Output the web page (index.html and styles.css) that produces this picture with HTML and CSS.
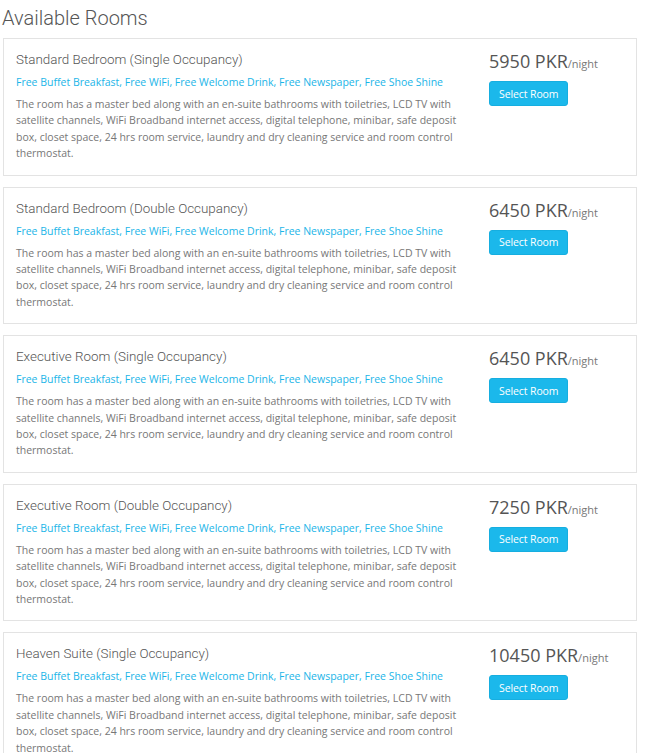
FILE: index.html
```html
<!DOCTYPE html>
<html>
<head>
<meta charset="utf-8">
<link rel="stylesheet" href="styles.css">
</head>
<body>
<div class="page">
  <h2 class="page-title">Available Rooms</h2>
  <div class="rooms">
    <div class="room">
      <div class="room-info">
        <h3 class="room-name">Standard Bedroom (Single Occupancy)</h3>
        <p class="amenities">Free Buffet Breakfast, Free WiFi, Free Welcome Drink, Free Newspaper, Free Shoe Shine</p>
        <p class="desc">The room has a master bed along with an en-suite bathrooms with toiletries, LCD TV with satellite channels, WiFi Broadband internet access, digital telephone, minibar, safe deposit box, closet space, 24 hrs room service, laundry and dry cleaning service and room control thermostat.</p>
      </div>
      <div class="room-book">
        <div class="price">5950 PKR<span class="per">/night</span></div>
        <button class="btn">Select Room</button>
      </div>
    </div>
    <div class="room">
      <div class="room-info">
        <h3 class="room-name">Standard Bedroom (Double Occupancy)</h3>
        <p class="amenities">Free Buffet Breakfast, Free WiFi, Free Welcome Drink, Free Newspaper, Free Shoe Shine</p>
        <p class="desc">The room has a master bed along with an en-suite bathrooms with toiletries, LCD TV with satellite channels, WiFi Broadband internet access, digital telephone, minibar, safe deposit box, closet space, 24 hrs room service, laundry and dry cleaning service and room control thermostat.</p>
      </div>
      <div class="room-book">
        <div class="price">6450 PKR<span class="per">/night</span></div>
        <button class="btn">Select Room</button>
      </div>
    </div>
    <div class="room">
      <div class="room-info">
        <h3 class="room-name">Executive Room (Single Occupancy)</h3>
        <p class="amenities">Free Buffet Breakfast, Free WiFi, Free Welcome Drink, Free Newspaper, Free Shoe Shine</p>
        <p class="desc">The room has a master bed along with an en-suite bathrooms with toiletries, LCD TV with satellite channels, WiFi Broadband internet access, digital telephone, minibar, safe deposit box, closet space, 24 hrs room service, laundry and dry cleaning service and room control thermostat.</p>
      </div>
      <div class="room-book">
        <div class="price">6450 PKR<span class="per">/night</span></div>
        <button class="btn">Select Room</button>
      </div>
    </div>
    <div class="room">
      <div class="room-info">
        <h3 class="room-name">Executive Room (Double Occupancy)</h3>
        <p class="amenities">Free Buffet Breakfast, Free WiFi, Free Welcome Drink, Free Newspaper, Free Shoe Shine</p>
        <p class="desc">The room has a master bed along with an en-suite bathrooms with toiletries, LCD TV with satellite channels, WiFi Broadband internet access, digital telephone, minibar, safe deposit box, closet space, 24 hrs room service, laundry and dry cleaning service and room control thermostat.</p>
      </div>
      <div class="room-book">
        <div class="price">7250 PKR<span class="per">/night</span></div>
        <button class="btn">Select Room</button>
      </div>
    </div>
    <div class="room">
      <div class="room-info">
        <h3 class="room-name">Heaven Suite (Single Occupancy)</h3>
        <p class="amenities">Free Buffet Breakfast, Free WiFi, Free Welcome Drink, Free Newspaper, Free Shoe Shine</p>
        <p class="desc">The room has a master bed along with an en-suite bathrooms with toiletries, LCD TV with satellite channels, WiFi Broadband internet access, digital telephone, minibar, safe deposit box, closet space, 24 hrs room service, laundry and dry cleaning service and room control thermostat.</p>
      </div>
      <div class="room-book">
        <div class="price">10450 PKR<span class="per">/night</span></div>
        <button class="btn">Select Room</button>
      </div>
    </div>
  </div>
</div>
</body>
</html>
```
FILE: styles.css
```css
html, body {
  margin: 0;
  padding: 0;
  background: #fff;
}
.page {
  padding: 5px 10px 0 2px;
  font-family: "Open Sans", "Liberation Sans", sans-serif;
  color: #666;
}
.page-title {
  font-family: Roboto, "Open Sans", sans-serif;
  font-weight: 300;
  font-size: 20px;
  line-height: 26px;
  color: #555;
  margin: 0 0 7px 0;
}
.rooms {
  display: flex;
  flex-direction: column;
  gap: 11px;
  margin-left: 1px;
}
.room {
  border: 1px solid #e3e3e3;
  display: grid;
  grid-template-columns: 1fr 135px;
  gap: 27px;
  padding: 11px 12px 11px 12px;
  height: 113.6px;
}
.room-name {
  font-family: Roboto, "Open Sans", sans-serif;
  font-weight: 300;
  font-size: 13.4px;
  line-height: 20px;
  color: #555;
  margin: 0 0 4px 0;
}
.amenities {
  font-size: 10.5px;
  line-height: 16px;
  color: #1ab5e8;
  margin: 0 0 6px 0;
}
.desc {
  font-size: 10.5px;
  line-height: 16.4px;
  color: #777;
  margin: 0;
}
.price {
  font-size: 18px;
  line-height: 20px;
  color: #555;
  margin: 1px 0 7px 0;
}
.per {
  font-size: 11px;
  color: #777;
}
.btn {
  display: block;
  font-family: "Open Sans", sans-serif;
  font-size: 10.5px;
  letter-spacing: -0.1px;
  color: #fff;
  background: #1bb8eb;
  border: 1px solid #16aee0;
  border-radius: 3px;
  padding: 0 9px;
  height: 25px;
  cursor: pointer;
}
```
